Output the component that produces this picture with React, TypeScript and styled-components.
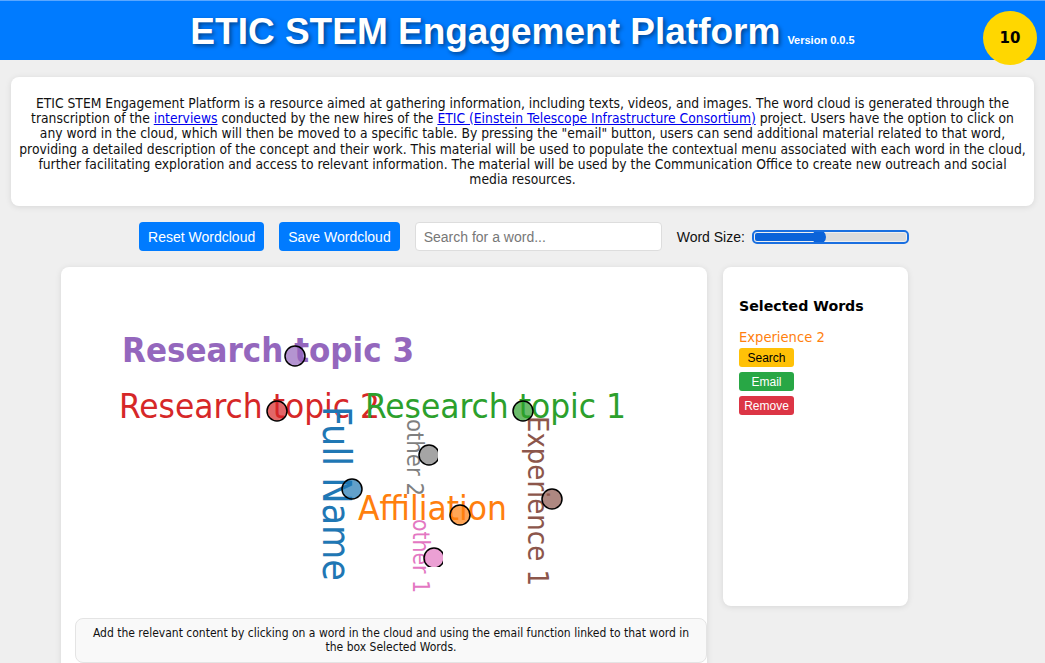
import React from "react";
import styled, { createGlobalStyle } from "styled-components";

const GlobalStyle = createGlobalStyle`
  html, body {
    margin: 0;
    padding: 0;
    background: #efefef;
    font-family: "DejaVu Sans Condensed", "DejaVu Sans", sans-serif;
    overflow: hidden;
  }
`;

const Header = styled.header`
  position: relative;
  height: 60px;
  background: #007bff;
  border-top: 1px solid #5aa7ff;
  box-sizing: border-box;
  display: flex;
  align-items: center;
  justify-content: center;
  gap: 7px;
`;

const Title = styled.h1`
  margin: 0;
  font-family: "Liberation Sans", Arial, sans-serif;
  font-size: 37px;
  font-weight: 700;
  color: #fff;
  text-shadow: 2px 2px 4px rgba(0, 0, 0, 0.45);
  line-height: 1;
  padding-top: 2px;
`;

const Version = styled.span`
  font-family: "Liberation Sans", Arial, sans-serif;
  font-size: 11px;
  font-weight: 700;
  color: #fff;
  align-self: flex-end;
  margin-bottom: 14px;
`;

const Badge = styled.div`
  position: absolute;
  right: 8px;
  top: 10px;
  width: 54px;
  height: 54px;
  border-radius: 50%;
  background: #ffd700;
  display: flex;
  align-items: center;
  justify-content: center;
  font-family: "DejaVu Sans", sans-serif;
  font-weight: 700;
  font-size: 15px;
  color: #000;
  z-index: 2;
`;

const InfoCard = styled.section`
  margin: 17px 11px 0;
  background: #fff;
  border-radius: 8px;
  box-shadow: 0 1px 6px rgba(0, 0, 0, 0.1);
  padding: 19px 4px 19px;
  text-align: center;
  font-size: 13.75px;
  line-height: 15.2px;
  color: #111;

  a {
    color: #0000ee;
  }
`;

const Controls = styled.div`
  margin-top: 16px;
  display: flex;
  justify-content: center;
  align-items: center;
  gap: 15px;
  font-family: "Liberation Sans", Arial, sans-serif;
  font-size: 14px;
`;

const BlueButton = styled.button`
  height: 29px;
  padding: 0 9px;
  border: 0;
  border-radius: 4px;
  background: #007bff;
  color: #fff;
  font-family: inherit;
  font-size: 14px;
  cursor: pointer;
`;

const SearchInput = styled.input`
  width: 247px;
  height: 29px;
  box-sizing: border-box;
  padding: 0 8px;
  border: 1px solid #ddd;
  border-radius: 4px;
  font-family: inherit;
  font-size: 14px;

  &::placeholder {
    color: #777;
  }
`;

const SizeLabel = styled.label`
  display: flex;
  align-items: center;
  gap: 10px;
  color: #111;
`;

const Range = styled.input`
  -webkit-appearance: none;
  appearance: none;
  width: 151px;
  height: 8px;
  margin: 0;
  border-radius: 2px;
  outline: 2px solid #1a6fe0;
  outline-offset: 1px;
  background: linear-gradient(
    to right,
    #0b63d9 0%,
    #0b63d9 ${(p) => p.value}%,
    #dcdcdc ${(p) => p.value}%,
    #dcdcdc 100%
  );

  &::-webkit-slider-thumb {
    -webkit-appearance: none;
    width: 14px;
    height: 14px;
    border-radius: 50%;
    background: #0b63d9;
  }
`;

const Main = styled.div`
  margin-top: 16px;
  padding-left: 61px;
  display: flex;
  align-items: flex-start;
  gap: 16px;
`;

const CloudCard = styled.div`
  width: 646px;
  height: 420px;
  background: #fff;
  border-radius: 8px;
  box-shadow: 0 1px 6px rgba(0, 0, 0, 0.1);
`;

const Note = styled.div`
  margin-left: 14px;
  background: #f9f9f9;
  border: 1px solid #e4e4e4;
  border-radius: 8px;
  padding: 8px 12px;
  text-align: center;
  font-size: 12px;
  line-height: 13.5px;
  color: #111;
`;

const SideCard = styled.aside`
  width: 185px;
  height: 339px;
  box-sizing: border-box;
  background: #fff;
  border-radius: 8px;
  box-shadow: 0 1px 6px rgba(0, 0, 0, 0.1);
  padding: 31px 16px;
`;

const SideTitle = styled.h3`
  margin: 0 0 14px;
  font-family: "DejaVu Sans", sans-serif;
  font-size: 14.2px;
  font-weight: 700;
  color: #000;
`;

const Picked = styled.div`
  color: #ff7f0e;
  font-size: 14.6px;
  margin-bottom: 3px;
`;

const ActionButton = styled.button<{ $bg: string; $fg: string }>`
  display: block;
  width: 55px;
  height: 19px;
  margin-bottom: 5px;
  padding: 0;
  border: 0;
  border-radius: 3px;
  background: ${(p) => p.$bg};
  color: ${(p) => p.$fg};
  font-family: "Liberation Sans", Arial, sans-serif;
  font-size: 12px;
`;

type Word = {
  text: string;
  color: string;
  size: number;
  x: number;
  y: number;
  len: number;
  rotate?: boolean;
  bold?: boolean;
};

const words: Word[] = [
  { text: "Research topic 3", color: "#9467bd", size: 34.5, x: 61, y: 95, len: 292, bold: true },
  { text: "Research topic 2", color: "#d62728", size: 34, x: 58, y: 151, len: 261 },
  { text: "Research topic 1", color: "#2ca02c", size: 34, x: 304, y: 151, len: 261 },
  { text: "Affiliation", color: "#ff7f0e", size: 34.5, x: 297, y: 253, len: 149 },
  { text: "Full Name", color: "#1f77b4", size: 38.5, x: 262, y: 139, len: 175, rotate: true },
  { text: "other 2", color: "#7f7f7f", size: 23.5, x: 346, y: 152, len: 77, rotate: true },
  { text: "Experience 1", color: "#8c564b", size: 29, x: 467, y: 149, len: 170, rotate: true },
  { text: "other 1", color: "#e377c2", size: 22.5, x: 352, y: 252, len: 74, rotate: true },
];

const dots = [
  { cx: 234, cy: 89, c: "#9467bd" },
  { cx: 216, cy: 144, c: "#d62728" },
  { cx: 462, cy: 144, c: "#2ca02c" },
  { cx: 368, cy: 188, c: "#7f7f7f", clip: true },
  { cx: 291, cy: 222, c: "#1f77b4" },
  { cx: 399, cy: 248, c: "#ff7f0e" },
  { cx: 491, cy: 232, c: "#8c564b" },
  { cx: 373, cy: 291, c: "#e377c2", clip: true },
];

const WordCloud = () => (
  <svg width={646} height={351} style={{ display: "block" }}>
    <defs>
      <clipPath id="cutRight">
        <rect x={0} y={0} width={377} height={351} />
      </clipPath>
      <clipPath id="cutPink">
        <rect x={0} y={0} width={382} height={300} />
      </clipPath>
    </defs>
    {words.map((w) => (
      <text
        key={w.text}
        x={w.rotate ? 0 : w.x}
        y={w.rotate ? 0 : w.y}
        transform={w.rotate ? `translate(${w.x},${w.y}) rotate(90)` : undefined}
        fill={w.color}
        fontSize={w.size}
        fontWeight={w.bold ? 700 : 400}
        fontFamily='"DejaVu Sans Condensed", "DejaVu Sans", sans-serif'
        textLength={w.len}
        lengthAdjust="spacingAndGlyphs"
      >
        {w.text}
      </text>
    ))}
    {dots.map((d, i) => (
      <circle
        key={i}
        cx={d.cx}
        cy={d.cy}
        r={10}
        fill={d.c}
        fillOpacity={0.7}
        stroke="#000"
        strokeWidth={1.5}
        clipPath={d.clip ? (i === 3 ? "url(#cutRight)" : "url(#cutPink)") : undefined}
      />
    ))}
  </svg>
);

const App = () => {
  return (
    <>
      <GlobalStyle />
      <Header>
        <Title>ETIC STEM Engagement Platform</Title>
        <Version>Version 0.0.5</Version>
        <Badge>10</Badge>
      </Header>

      <InfoCard>
        ETIC STEM Engagement Platform is a resource aimed at gathering information, including
        texts, videos, and images. The word cloud is generated through the transcription of the{" "}
        <a href="#">interviews</a> conducted by the new hires of the{" "}
        <a href="#">ETIC (Einstein Telescope Infrastructure Consortium)</a> project. Users have the
        option to click on
        <br />
        any word in the cloud, which will then be moved to a specific table. By pressing the
        "email" button, users can send additional material related to that word,
        <br />
        providing a detailed description of the concept and their work. This material will be used
        to populate the contextual menu associated with each word in the cloud,
        <br />
        further facilitating exploration and access to relevant information. The material will be
        used by the Communication Office to create new outreach and social
        <br />
        media resources.
      </InfoCard>

      <Controls>
        <BlueButton>Reset Wordcloud</BlueButton>
        <BlueButton>Save Wordcloud</BlueButton>
        <SearchInput placeholder="Search for a word..." />
        <SizeLabel>
          Word Size:
          <Range type="range" min={0} max={100} value={42} readOnly />
        </SizeLabel>
      </Controls>

      <Main>
        <CloudCard>
          <WordCloud />
          <Note>
            Add the relevant content by clicking on a word in the cloud and using the email function
            linked to that word in the box Selected Words.
          </Note>
        </CloudCard>
        <SideCard>
          <SideTitle>Selected Words</SideTitle>
          <Picked>Experience 2</Picked>
          <ActionButton $bg="#ffc107" $fg="#000">Search</ActionButton>
          <ActionButton $bg="#28a745" $fg="#fff">Email</ActionButton>
          <ActionButton $bg="#dc3545" $fg="#fff">Remove</ActionButton>
        </SideCard>
      </Main>
    </>
  );
};

export default App;
